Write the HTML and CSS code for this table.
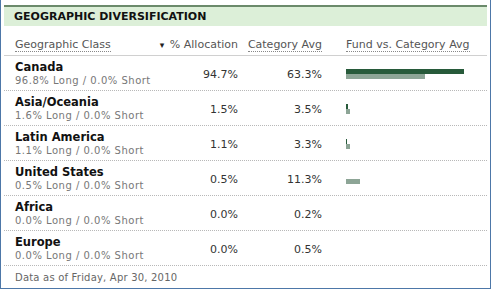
FILE: index.html
```html
<!DOCTYPE html>
<html>
<head>
<meta charset="utf-8">
<link rel="stylesheet" href="styles.css">
</head>
<body>
<div class="frame">
  <div class="panel-head">GEOGRAPHIC DIVERSIFICATION</div>
  <div class="row head">
    <div class="c-name"><span class="lnk">Geographic Class</span></div>
    <div class="c-alloc"><span class="tri">&#9662;</span> % Allocation</div>
    <div class="c-cat"><span class="lnk">Category Avg</span></div>
    <div class="c-bar"><span class="lnk">Fund vs. Category Avg</span></div>
  </div>

  <div class="row">
    <div class="c-name"><div class="nm">Canada</div><div class="sub">96.8% Long / 0.0% Short</div></div>
    <div class="c-alloc">94.7%</div>
    <div class="c-cat">63.3%</div>
    <div class="c-bar"><div class="bar fund" style="width:118px"></div><div class="bar cat" style="width:79px"></div></div>
  </div>
  <div class="row">
    <div class="c-name"><div class="nm">Asia/Oceania</div><div class="sub">1.6% Long / 0.0% Short</div></div>
    <div class="c-alloc">1.5%</div>
    <div class="c-cat">3.5%</div>
    <div class="c-bar"><div class="bar fund" style="width:2px"></div><div class="bar cat" style="width:4px"></div></div>
  </div>
  <div class="row">
    <div class="c-name"><div class="nm">Latin America</div><div class="sub">1.1% Long / 0.0% Short</div></div>
    <div class="c-alloc">1.1%</div>
    <div class="c-cat">3.3%</div>
    <div class="c-bar"><div class="bar fund" style="width:1px"></div><div class="bar cat" style="width:4px"></div></div>
  </div>
  <div class="row">
    <div class="c-name"><div class="nm">United States</div><div class="sub">0.5% Long / 0.0% Short</div></div>
    <div class="c-alloc">0.5%</div>
    <div class="c-cat">11.3%</div>
    <div class="c-bar"><div class="bar fund" style="width:0px"></div><div class="bar cat" style="width:14px"></div></div>
  </div>
  <div class="row">
    <div class="c-name"><div class="nm">Africa</div><div class="sub">0.0% Long / 0.0% Short</div></div>
    <div class="c-alloc">0.0%</div>
    <div class="c-cat">0.2%</div>
    <div class="c-bar"></div>
  </div>
  <div class="row">
    <div class="c-name"><div class="nm">Europe</div><div class="sub">0.0% Long / 0.0% Short</div></div>
    <div class="c-alloc">0.0%</div>
    <div class="c-cat">0.5%</div>
    <div class="c-bar"></div>
  </div>
  <div class="foot">Data as of Friday, Apr 30, 2010</div>
</div>
</body>
</html>
```
FILE: styles.css
```css
html, body {
  margin: 0;
  padding: 0;
  background: #ffffff;
}
body {
  font-family: "DejaVu Sans", Verdana, sans-serif;
  font-size: 11px;
  color: #333;
}
.frame {
  box-sizing: border-box;
  width: 491px;
  height: 289px;
  border: 1px solid #4d77a8;
  border-top: none;
  padding: 5px 3px 0 3px;
}
.panel-head {
  border-top: 2px solid #6b8a6b;
  background: #dcefd8;
  height: 19px;
  line-height: 20px;
  padding-left: 10px;
  font-weight: bold;
  font-size: 11px;
  color: #111;
}
.row {
  display: grid;
  grid-template-columns: 146px 88px 84px 1fr;
  align-items: center;
  box-sizing: border-box;
  height: 35px;
  padding-top: 2px;
  border-bottom: 1px dotted #b8b8b8;
}
.row.head {
  height: 30px;
  padding-top: 0;
  align-items: end;
  border-bottom: 1px solid #d0d0d0;
  color: #555;
}
.row.head > div {
  padding-bottom: 4px;
}
.c-name {
  padding-left: 11px;
  white-space: nowrap;
}
.c-alloc, .c-cat {
  text-align: right;
}
.c-bar {
  padding-left: 24px;
}
.lnk {
  border-bottom: 1px dotted #888;
}
.tri {
  font-size: 9px;
  color: #222;
  margin-right: 2px;
}
.nm {
  font-weight: bold;
  font-size: 11.5px;
  color: #111;
  line-height: 13px;
}
.sub {
  font-size: 10px;
  letter-spacing: 0.5px;
  color: #777;
  line-height: 13px;
}
.bar {
  height: 5px;
}
.bar.fund {
  background: #275a3a;
}
.bar.cat {
  background: #8da596;
}
.foot {
  padding-left: 11px;
  line-height: 23px;
  color: #666;
  font-size: 10px;
  letter-spacing: 0.2px;
}
```
